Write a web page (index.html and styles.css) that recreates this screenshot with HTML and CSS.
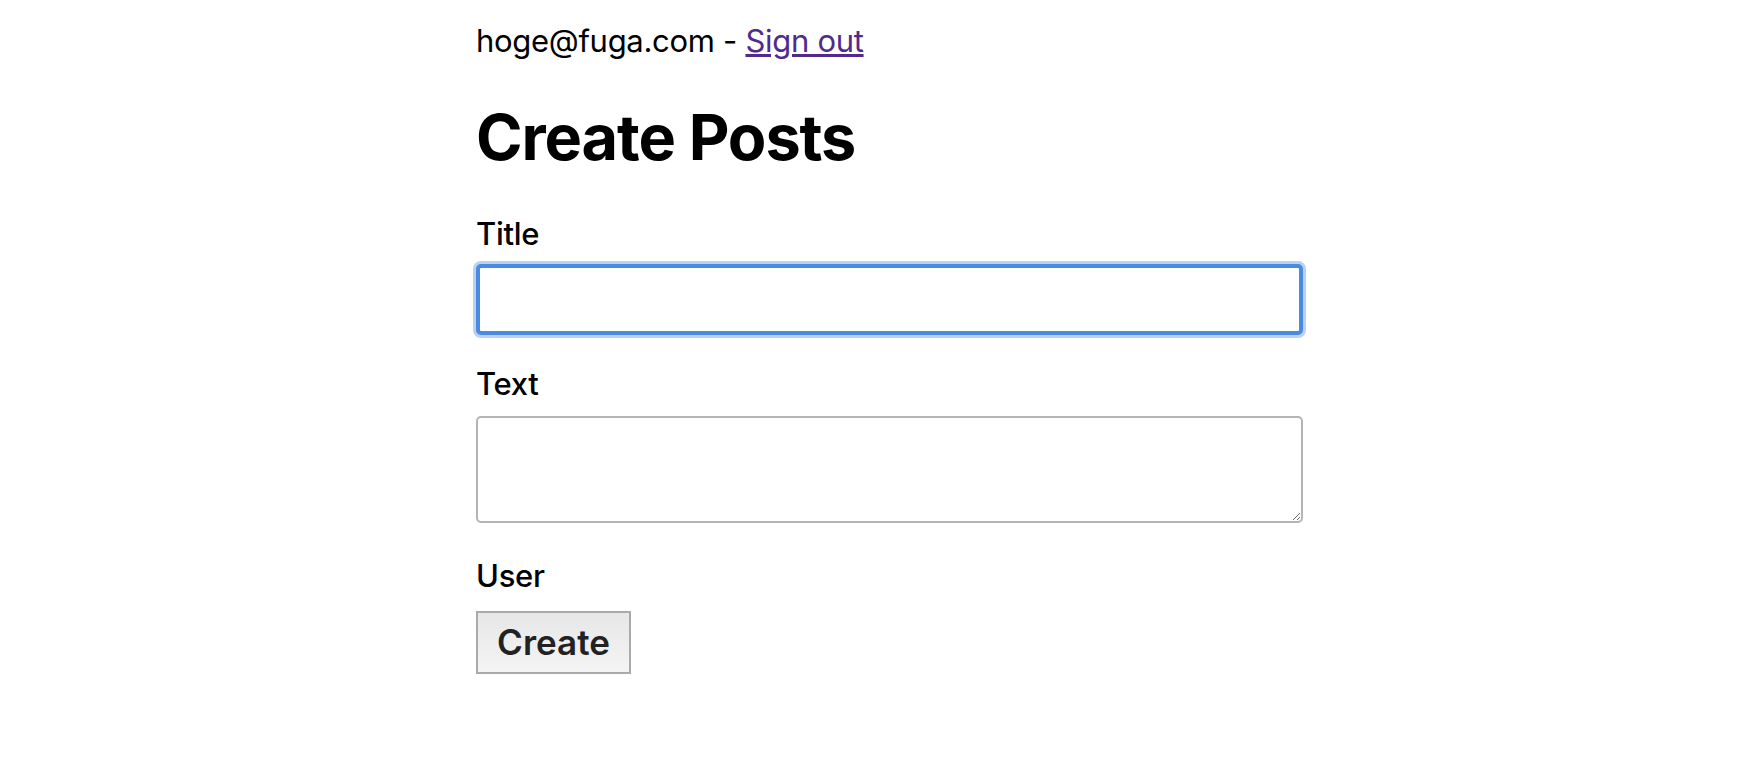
FILE: index.html
```html
<!DOCTYPE html>
<html lang="en">
<head>
    <meta charset="UTF-8">
    <meta name="viewport" content="width=device-width, initial-scale=1.0">
    <title>Create Posts</title>
    <link rel="stylesheet" href="styles.css">
</head>
<body>
    <div id="page">
        <p class="account">hoge@fuga.com - <a href="#">Sign out</a></p>
        <h1>Create Posts</h1>
        <form id="post-form">
            <label for="title" class="label-title">Title</label>
            <input type="text" id="title" class="field-focus">
            <label for="text" class="label-text">Text</label>
            <textarea id="text"></textarea>
            <label class="label-user">User</label>
            <button type="button" id="create-button">Create</button>
        </form>
    </div>
</body>
</html>
```

FILE: styles.css
```css
body {
    margin: 0;
    background-color: #fff;
    color: #000;
    font-family: Inter, "Noto Sans", sans-serif;
    font-size: 31px;
    line-height: 38px;
}

#page {
    width: 827px;
    margin-left: 476px;
    padding-top: 22px;
}

.account {
    margin: 0;
    letter-spacing: -0.3px;
}

.account a {
    color: #502a8c;
}

h1 {
    margin: 39px 0 0;
    font-size: 63px;
    line-height: 76px;
    font-weight: 700;
    letter-spacing: -1.1px;
}

#post-form {
    display: flex;
    flex-direction: column;
    align-items: flex-start;
    margin-top: 40px;
}

label {
    display: block;
    font-weight: 500;
    letter-spacing: -0.3px;
}

.label-title {
    margin-bottom: 11px;
}

.label-text {
    margin-top: 30px;
    margin-bottom: 13px;
}

.label-user {
    margin-top: 34px;
    margin-bottom: 16px;
}

input, textarea {
    box-sizing: border-box;
    width: 100%;
    margin: 0;
    font: inherit;
    background-color: #fff;
}

.field-focus {
    height: 71px;
    border: 4px solid #4a8ae0;
    border-radius: 5px;
    box-shadow: 0 0 0 3px #b6d2f5;
    outline: none;
}

textarea {
    display: block;
    height: 107px;
    border: 2px solid #b4b4b4;
    border-radius: 5px;
    resize: vertical;
}

#create-button {
    box-sizing: border-box;
    width: 155px;
    height: 63px;
    padding: 0 0 2px;
    border: 2px solid #aaaaaa;
    background: linear-gradient(#e7e7e7, #f4f4f4);
    color: #222;
    font-family: Inter, "Noto Sans", sans-serif;
    font-size: 35px;
    font-weight: 600;
    letter-spacing: 0;
    cursor: pointer;
}
```
